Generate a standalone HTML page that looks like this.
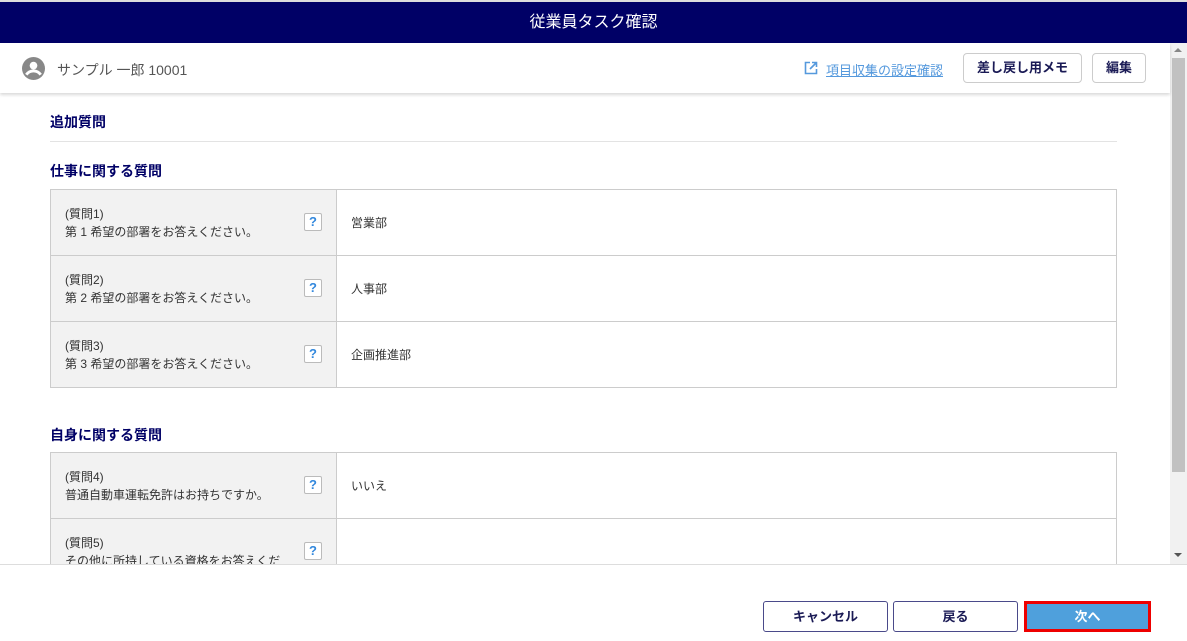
<!DOCTYPE html>
<html><head><meta charset="utf-8"><style>
*{box-sizing:border-box;margin:0;padding:0}
body{width:1187px;height:641px;overflow:hidden;background:#fff;font-family:"Liberation Sans","Noto Sans CJK JP",sans-serif;position:relative;color:#333}
.top{position:absolute;left:0;top:0;width:1187px;height:43px;background:#000066;color:#fff;font-size:16px;text-align:center;line-height:41px;border-top:2px solid #ddd}
.sub{position:absolute;left:0;top:43px;width:1170px;height:50px;background:#fff;box-shadow:0 2px 3px rgba(0,0,0,.15);z-index:2}
.name{position:absolute;left:57px;top:17px;font-size:14px;color:#555}
.link{position:absolute;left:804px;top:17px;font-size:13px;color:#5599dd;text-decoration:underline}
.hb{position:absolute;top:10px;height:30px;border:1px solid #ccc;border-radius:4px;font-size:13px;font-weight:bold;color:#1a1a55;text-align:center;line-height:28px}
.scroll{position:absolute;left:1170px;top:43px;width:17px;height:521px;background:#f1f1f1}
.thumb{position:absolute;left:1172px;top:58px;width:13px;height:414px;background:#c1c1c1}
.h{position:absolute;left:50px;font-size:14px;font-weight:bold;color:#000066}
table{position:absolute;left:50px;width:1067px;border-collapse:collapse}
td{border:1px solid #ccc;height:66px;font-size:12px;vertical-align:middle}
td.l{width:286px;background:#f2f2f2;padding-left:14px;line-height:18px;position:relative;color:#333}
td.r{padding-left:14px}
.q{position:absolute;left:253px;top:23px;width:18px;height:18px;border:1px solid #bbb;border-radius:2px;background:#fff;color:#3388dd;font-weight:bold;font-size:13px;text-align:center;line-height:16px}
.foot{position:absolute;left:0;top:564px;width:1187px;height:77px;background:#fff;border-top:1px solid #ddd;z-index:3}
.fb{position:absolute;top:36px;height:31px;border:1px solid #4a4a8a;border-radius:3px;font-size:13px;font-weight:bold;color:#1a1a55;text-align:center;line-height:29px;background:#fff}
</style></head><body>
<div class="top">従業員タスク確認</div>
<div class="sub">
<svg style="position:absolute;left:22px;top:14px" width="23" height="23" viewBox="0 0 24 24"><circle cx="12" cy="12" r="12" fill="#888"/><circle cx="12" cy="9" r="4" fill="#fff"/><path d="M4.5 18.5c2-3 5-4 7.5-4s5.5 1 7.5 4" stroke="#fff" stroke-width="3" fill="none"/></svg>
<div class="name">サンプル 一郎 10001</div>
<svg style="position:absolute;left:804px;top:18px" width="14" height="14" viewBox="0 0 14 14"><path d="M6 1.5H1.5v11h11V8M8 1.5h4.5V6M12.5 1.5 6 8" stroke="#5599dd" stroke-width="1.6" fill="none"/></svg>
<div class="link" style="left:826px">項目収集の設定確認</div>
<div class="hb" style="left:963px;width:119px">差し戻し用メモ</div>
<div class="hb" style="left:1092px;width:54px">編集</div>
</div>
<div class="scroll"></div><div class="thumb"></div>
<div style="position:absolute;left:1174px;top:48px;border:4px solid transparent;border-bottom:4px solid #888;border-top:0"></div>
<div class="h" style="top:112px">追加質問</div>
<div style="position:absolute;left:50px;top:141px;width:1067px;height:1px;background:#e3e3e3"></div>
<div class="h" style="top:161px">仕事に関する質問</div>
<table style="top:189px">
<tr><td class="l">(質問1)<br>第 1 希望の部署をお答えください。<span class="q">?</span></td><td class="r">営業部</td></tr>
<tr><td class="l" style="height:65px">(質問2)<br>第 2 希望の部署をお答えください。<span class="q">?</span></td><td class="r">人事部</td></tr>
<tr><td class="l">(質問3)<br>第 3 希望の部署をお答えください。<span class="q">?</span></td><td class="r">企画推進部</td></tr>
</table>
<div class="h" style="top:425px">自身に関する質問</div>
<table style="top:452px">
<tr><td class="l">(質問4)<br>普通自動車運転免許はお持ちですか。<span class="q">?</span></td><td class="r">いいえ</td></tr>
<tr><td class="l">(質問5)<br>その他に所持している資格をお答えくだ<span class="q">?</span></td><td class="r"></td></tr>
</table>
<div class="foot">
<div style="position:absolute;left:1174px;top:-12px;border:4px solid transparent;border-top:4px solid #555;border-bottom:0"></div>
<div class="fb" style="left:763px;width:125px">キャンセル</div>
<div class="fb" style="left:893px;width:125px">戻る</div>
<div class="fb" style="left:1024px;width:127px;background:#4fa0dc;border:3px solid #e00;color:#fff;line-height:25px;border-radius:0">次へ</div>
</div>
</body></html>
